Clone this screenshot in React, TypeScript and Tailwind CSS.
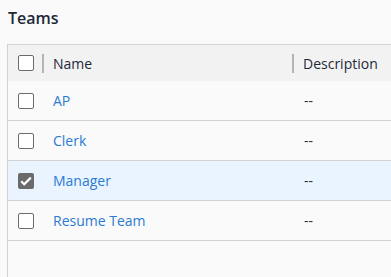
import React from "react";

type Team = { name: string; description: string; checked?: boolean };

const teams: Team[] = [
  { name: "AP", description: "--" },
  { name: "Clerk", description: "--" },
  { name: "Manager", description: "--", checked: true },
  { name: "Resume Team", description: "--" },
];

const Checkbox: React.FC<{ checked?: boolean }> = ({ checked }) =>
  checked ? (
    <span className="w-4 h-4 rounded-[2px] bg-[#6b6b6b] flex items-center justify-center">
      <svg width="16" height="16" viewBox="0 0 16 16">
        <path d="M3.2 8.2l3 3L12.8 4.6" fill="none" stroke="#fff" strokeWidth="2.2" />
      </svg>
    </span>
  ) : (
    <span className="w-4 h-4 rounded-[2px] border border-[#6b6b6b] bg-white" />
  );

const App: React.FC = () => {
  return (
    <div
      className="w-[391px] h-[277px] bg-[#fafafa] overflow-hidden pl-[7px] pt-[7px]"
      style={{ fontFamily: '"Open Sans", sans-serif' }}
    >
      <h2 className="text-[16px] font-semibold text-[#1e2938] leading-[22px] pl-[1px]">Teams</h2>
      <div className="mt-[15px] w-[430px] h-[260px] border-l border-t border-[#d2d2d2]">
        <div className="flex items-center h-[36px] bg-[#f2f2f2] text-[14px] text-[#1e2938]">
          <div className="w-[34px] flex items-center pl-[10px]">
            <Checkbox />
          </div>
          <div className="w-[250px] flex items-center">
            <span className="w-[2px] h-[19px] bg-[#b4b4b4]" />
            <span className="ml-[9px]">Name</span>
          </div>
          <div className="flex-1 flex items-center">
            <span className="w-[2px] h-[19px] bg-[#b4b4b4]" />
            <span className="ml-[9px]">Description</span>
          </div>
        </div>
        {teams.map(({ name, description, checked }, idx) => (
          <div
            key={idx}
            className={`flex items-center h-[40px] border-b border-[#d2d2d2] text-[14px] ${
              checked ? "bg-[#e9f4ff]" : ""
            }`}
          >
            <div className="w-[34px] flex items-center pl-[10px]">
              <Checkbox checked={checked} />
            </div>
            <div className="w-[250px] pl-[11px] text-[#2b7bd3]">{name}</div>
            <div className="flex-1 pl-[12px] text-[#333]">{description}</div>
          </div>
        ))}
      </div>
    </div>
  );
};

export default App;
